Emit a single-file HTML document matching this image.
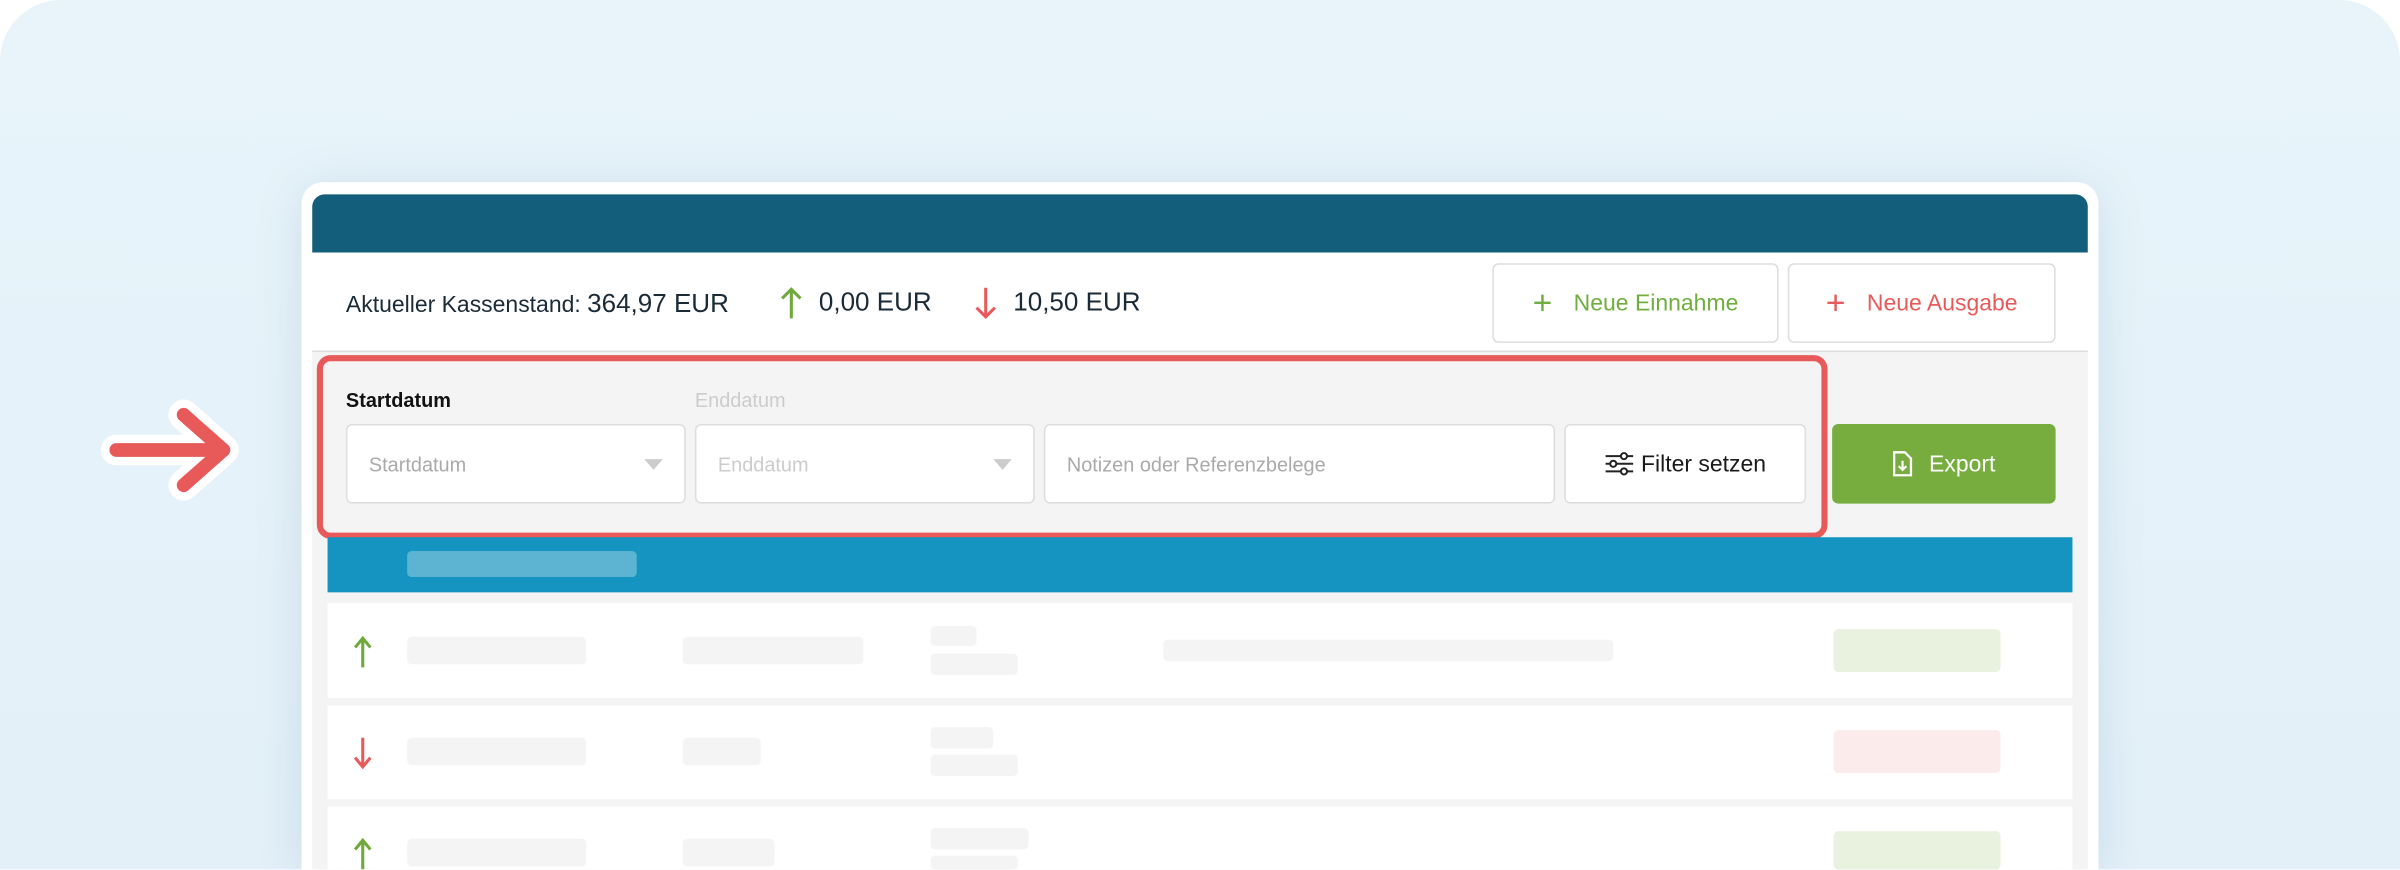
<!DOCTYPE html>
<html style="overflow:hidden"><head><meta charset="utf-8"><style>
html,body{margin:0;padding:0;background:#fff;}
body{width:2400px;height:870px;overflow:hidden;position:relative;font-family:"Liberation Sans",sans-serif;}
#w{position:absolute;left:0;top:0;width:1568px;height:568px;overflow:hidden;transform:scale(1.530612);transform-origin:0 0;}
.a{position:absolute;box-sizing:border-box;}
.bg{left:0;top:0;width:1568px;height:568px;border-radius:40px 40px 0 0;background:linear-gradient(180deg,#e8f4fa,#e3f0f8);}
.card{left:197px;top:119px;width:1174px;height:449px;background:#fff;border-radius:14px 14px 0 0;box-shadow:0 4px 30px rgba(80,130,170,.18);}
.in{left:204px;top:127px;width:1160px;height:441px;background:#f4f4f4;border-radius:8px 8px 0 0;overflow:hidden;}
.t{font-size:16px;color:#1a2a36;}
.btn{background:#fff;border:1px solid #ddd;border-radius:4px;font-size:15px;display:flex;align-items:center;justify-content:center;}
.inp{background:#fff;border:1px solid #ddd;border-radius:4px;font-size:13px;color:#aaa;display:flex;align-items:center;padding-left:14px;}
.car{position:absolute;right:14px;top:22px;width:0;height:0;border-left:6px solid transparent;border-right:6px solid transparent;border-top:7px solid #ccc;}
.p{background:#f4f4f4;border-radius:3px;}
.row{left:214px;width:1140px;background:#fff;}
</style></head><body><div id="w">
<div class="a bg"></div>
<div class="a card"></div>
<div class="a in"></div>
<div class="a" style="left:204px;top:127px;width:1160px;height:38px;background:#135e7a;border-radius:8px 8px 0 0;"></div>
<div class="a" style="left:204px;top:165px;width:1160px;height:65px;background:#fff;border-bottom:1px solid #ddd;"></div>
<div class="a t" style="left:226px;top:189px;white-space:nowrap;font-size:15px;">Aktueller Kassenstand: <span style="font-size:17px;">364,97 EUR</span></div>
<svg class="a" style="left:508px;top:187px" width="18" height="22" viewBox="0 0 18 22"><path d="M9 21V2M3 8l6-6 6 6" stroke="#6fa83b" stroke-width="2" fill="none"/></svg>
<div class="a t" style="left:535px;top:188px;font-size:17px;">0,00 EUR</div>
<svg class="a" style="left:635px;top:187px" width="18" height="22" viewBox="0 0 18 22"><path d="M9 1v19M3 14l6 6 6-6" stroke="#e85a5a" stroke-width="2" fill="none"/></svg>
<div class="a t" style="left:662px;top:188px;font-size:17px;">10,50 EUR</div>
<div class="a btn" style="left:975px;top:172px;width:187px;height:52px;color:#6fae3f;"><span style="font-size:22px;font-weight:300;margin-right:14px;">+</span>Neue Einnahme</div>
<div class="a btn" style="left:1168px;top:172px;width:175px;height:52px;color:#e85a5a;"><span style="font-size:22px;font-weight:300;margin-right:14px;">+</span>Neue Ausgabe</div>
<div class="a" style="left:226px;top:254px;font-size:13px;font-weight:bold;color:#111;">Startdatum</div>
<div class="a" style="left:454px;top:254px;font-size:13px;color:#ccc;">Enddatum</div>
<div class="a inp" style="left:226px;top:277px;width:222px;height:52px;">Startdatum<div class="car"></div></div>
<div class="a inp" style="left:454px;top:277px;width:222px;height:52px;color:#ccc;">Enddatum<div class="car"></div></div>
<div class="a inp" style="left:682px;top:277px;width:334px;height:52px;">Notizen oder Referenzbelege</div>
<div class="a btn" style="left:1022px;top:277px;width:158px;height:52px;color:#1a1a1a;">
<svg width="20" height="18" viewBox="0 0 20 18" style="margin-right:4px"><g stroke="#222" stroke-width="1.3" fill="none"><path d="M1 4h10M15 4h4M1 9h3M8 9h11M1 14h10M15 14h4"/><circle cx="13" cy="4" r="2"/><circle cx="6" cy="9" r="2"/><circle cx="13" cy="14" r="2"/></g></svg>Filter setzen</div>
<div class="a btn" style="left:1197px;top:277px;width:146px;height:52px;background:#77ad3e;border:none;color:#fff;">
<svg width="14" height="18" viewBox="0 0 14 18" style="margin-right:10px"><path d="M1.5 1.5h7l4 4v11h-11z" stroke="#fff" stroke-width="1.5" fill="none"/><path d="M7 7v6M4.5 10.5L7 13l2.5-2.5" stroke="#fff" stroke-width="1.4" fill="none"/></svg>Export</div>
<div class="a" style="left:207px;top:232px;width:987px;height:120px;border:4px solid #e85a5a;border-radius:9px;"></div>
<div class="a" style="left:214px;top:351px;width:1140px;height:36px;background:#1594c1;"></div>
<div class="a" style="left:266px;top:360px;width:150px;height:17px;background:#5cb3d2;border-radius:3px;"></div>
<div class="a row" style="top:394px;height:62px;"></div>
<div class="a row" style="top:461px;height:61px;"></div>
<div class="a row" style="top:527px;height:41px;"></div>
<svg class="a" style="left:229px;top:415px" width="16" height="22" viewBox="0 0 16 22"><path d="M8 21V2M3 8l5-6 5 6" stroke="#6fa83b" stroke-width="2" fill="none"/></svg>
<svg class="a" style="left:229px;top:481px" width="16" height="22" viewBox="0 0 16 22"><path d="M8 1v19M3 14l5 6 5-6" stroke="#e85a5a" stroke-width="2" fill="none"/></svg>
<svg class="a" style="left:229px;top:547px" width="16" height="21" viewBox="0 0 16 21"><path d="M8 21V2M3 8l5-6 5 6" stroke="#6fa83b" stroke-width="2" fill="none"/></svg>
<div class="a p" style="left:266px;top:416px;width:117px;height:18px"></div>
<div class="a p" style="left:446px;top:416px;width:118px;height:18px"></div>
<div class="a p" style="left:608px;top:409px;width:30px;height:13px"></div>
<div class="a p" style="left:608px;top:427px;width:57px;height:14px"></div>
<div class="a p" style="left:760px;top:418px;width:294px;height:14px"></div>
<div class="a" style="left:1198px;top:411px;width:109px;height:28px;background:#e8f2de;border-radius:3px"></div>
<div class="a p" style="left:266px;top:482px;width:117px;height:18px"></div>
<div class="a p" style="left:446px;top:482px;width:51px;height:18px"></div>
<div class="a p" style="left:608px;top:475px;width:41px;height:14px"></div>
<div class="a p" style="left:608px;top:493px;width:57px;height:14px"></div>
<div class="a" style="left:1198px;top:477px;width:109px;height:28px;background:#fcebeb;border-radius:3px"></div>
<div class="a p" style="left:266px;top:548px;width:117px;height:18px"></div>
<div class="a p" style="left:446px;top:548px;width:60px;height:18px"></div>
<div class="a p" style="left:608px;top:541px;width:64px;height:14px"></div>
<div class="a p" style="left:608px;top:559px;width:57px;height:9px"></div>
<div class="a" style="left:1198px;top:543px;width:109px;height:25px;background:#e8f2de;border-radius:3px"></div>
<svg class="a" style="left:60px;top:255px" width="110" height="80" viewBox="60 255 110 80"><g fill="none" stroke-linecap="round" stroke-linejoin="round"><path d="M76 294h70M120 271l26 23-26 23" stroke="#fff" stroke-width="20"/><path d="M76 294h70M120 271l26 23-26 23" stroke="#e85a5a" stroke-width="9"/></g></svg>
</div></body></html>
